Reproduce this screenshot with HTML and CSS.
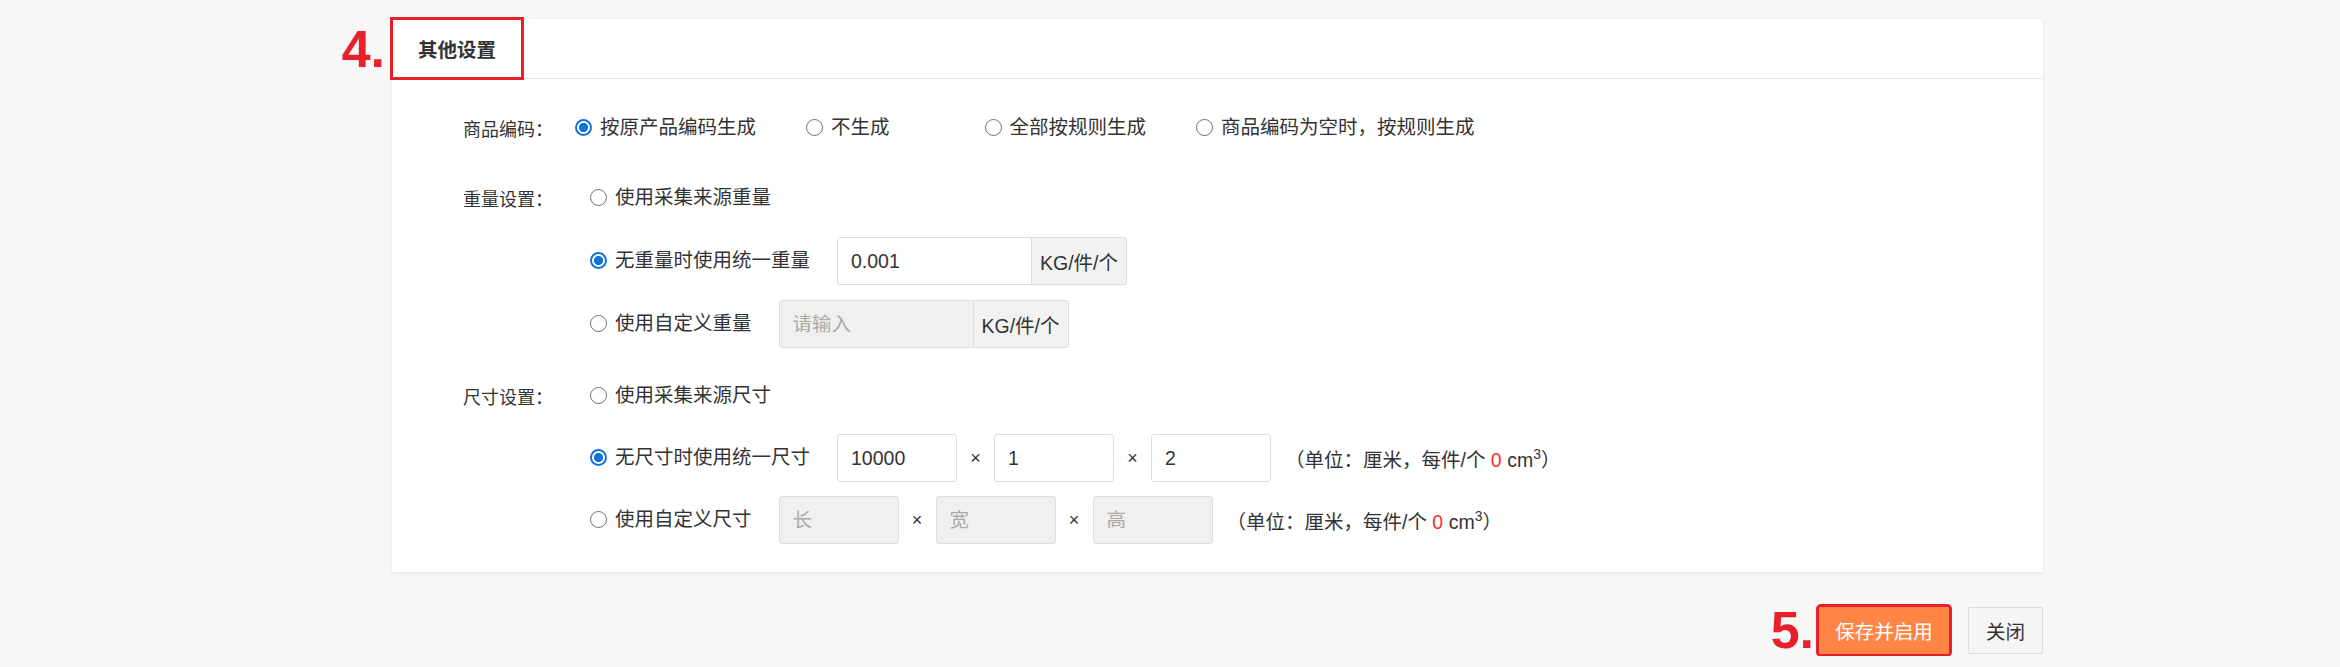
FILE: index.html
```html
<!DOCTYPE html>
<html lang="zh-CN">
<head>
<meta charset="UTF-8">
<meta name="viewport" content="width=device-width, initial-scale=1.0">
<title>其他设置</title>
<link rel="stylesheet" href="styles.css">
</head>
<body>
<div class="page">
    <div class="panel">
        <div class="panel-head">
            <div class="tab">
                <span class="mark mark-tab">4.</span>
                其他设置
            </div>
        </div>
        <div class="panel-body">
            <div class="form-row">
                <div class="form-label">商品编码：</div>
                <div class="form-field">
                    <div class="field-line">
                        <label class="radio"><input type="radio" name="code" checked>按原产品编码生成</label>
                        <label class="radio radio-wide"><input type="radio" name="code">不生成</label>
                        <label class="radio"><input type="radio" name="code">全部按规则生成</label>
                        <label class="radio"><input type="radio" name="code">商品编码为空时，按规则生成</label>
                    </div>
                </div>
            </div>
            <div class="form-row">
                <div class="form-label">重量设置：</div>
                <div class="form-field indent">
                    <div class="field-line">
                        <label class="radio"><input type="radio" name="weight">使用采集来源重量</label>
                    </div>
                    <div class="field-line">
                        <label class="radio"><input type="radio" name="weight" checked>无重量时使用统一重量</label>
                        <div class="input-group">
                            <input class="text-input" type="text" value="0.001">
                            <span class="addon">KG/件/个</span>
                        </div>
                    </div>
                    <div class="field-line">
                        <label class="radio"><input type="radio" name="weight">使用自定义重量</label>
                        <div class="input-group">
                            <input class="text-input is-disabled" type="text" placeholder="请输入">
                            <span class="addon">KG/件/个</span>
                        </div>
                    </div>
                </div>
            </div>
            <div class="form-row size-row">
                <div class="form-label">尺寸设置：</div>
                <div class="form-field indent">
                    <div class="field-line">
                        <label class="radio"><input type="radio" name="size">使用采集来源尺寸</label>
                    </div>
                    <div class="field-line">
                        <label class="radio"><input type="radio" name="size" checked>无尺寸时使用统一尺寸</label>
                        <div class="dims">
                            <input class="text-input dim-input" type="text" value="10000">
                            <span class="times">×</span>
                            <input class="text-input dim-input" type="text" value="1">
                            <span class="times">×</span>
                            <input class="text-input dim-input" type="text" value="2">
                        </div>
                        <span class="note">（单位：厘米，每件/个 <em class="zero">0</em> cm<sup>3</sup>）</span>
                    </div>
                    <div class="field-line">
                        <label class="radio"><input type="radio" name="size">使用自定义尺寸</label>
                        <div class="dims">
                            <input class="text-input dim-input is-disabled" type="text" placeholder="长">
                            <span class="times">×</span>
                            <input class="text-input dim-input is-disabled" type="text" placeholder="宽">
                            <span class="times">×</span>
                            <input class="text-input dim-input is-disabled" type="text" placeholder="高">
                        </div>
                        <span class="note">（单位：厘米，每件/个 <em class="zero">0</em> cm<sup>3</sup>）</span>
                    </div>
                </div>
            </div>
        </div>
    </div>
    <div class="actions">
        <span class="mark">5.</span>
        <button class="btn btn-primary">保存并启用</button>
        <button class="btn btn-default">关闭</button>
    </div>
</div>
</body>
</html>
```

FILE: styles.css
```css
body {
    margin: 0;
    background-color: #f7f7f7;
    color: #333;
    font-family: "Liberation Sans", "Noto Sans CJK SC", sans-serif;
}
.page {
    width: 1651px;
    margin-left: 392px;
    padding-top: 19px;
}
.panel {
    background-color: #fff;
    box-shadow: 0 1px 4px rgba(0, 0, 0, 0.08);
}
.panel-head {
    display: flex;
    height: 59px;
    border-bottom: 1px solid #e6e6e6;
}
.tab {
    position: relative;
    display: flex;
    align-items: center;
    padding: 0 26px;
    font-size: 19.5px;
    font-weight: bold;
    color: #333;
    outline: 3px solid #e8202a;
    outline-offset: -1px;
}
.mark {
    font-family: "Liberation Sans", sans-serif;
    font-size: 52px;
    font-weight: bold;
    line-height: 1;
    color: #e8202a;
}
.mark-tab {
    position: absolute;
    right: calc(100% + 7px);
    top: 50%;
    transform: translateY(-50%);
}
.panel-body {
    display: flex;
    flex-direction: column;
    gap: 22px;
    padding: 25px 0 28px 71px;
}
.form-row {
    display: flex;
    align-items: flex-start;
}
.form-row.size-row {
    margin-top: 2px;
}
.form-label {
    display: flex;
    align-items: center;
    width: 112px;
    height: 48px;
    font-size: 18px;
}
.form-field {
    display: flex;
    flex-direction: column;
    gap: 15px;
}
.form-field.indent {
    padding-left: 15px;
}
.size-row .form-field {
    gap: 14px;
}
.field-line {
    display: flex;
    align-items: center;
    height: 48px;
}
.radio {
    display: inline-flex;
    align-items: center;
    gap: 8px;
    margin-right: 50px;
    font-size: 19.5px;
    line-height: 1.2;
    cursor: pointer;
}
.radio-wide {
    margin-right: 95px;
}
.field-line .radio:last-child,
.form-field.indent .radio {
    margin-right: 0;
}
.radio input {
    appearance: none;
    -webkit-appearance: none;
    box-sizing: border-box;
    width: 17px;
    height: 17px;
    margin: 0;
    border: 1.5px solid #6f6f6f;
    border-radius: 50%;
    background-color: #fff;
}
.radio input:checked {
    border: 2px solid #1473d6;
    background: radial-gradient(circle, #1473d6 0 4.3px, #fff 4.8px);
}
.input-group {
    display: flex;
    margin-left: 27px;
}
.text-input {
    box-sizing: border-box;
    width: 195px;
    height: 48px;
    padding: 0 13px;
    border: 1px solid #ddd;
    border-radius: 3px;
    font-family: inherit;
    font-size: 19.5px;
    color: #333;
    background-color: #fff;
    outline: none;
}
.text-input::placeholder {
    color: #aaa;
}
.text-input.is-disabled {
    background-color: #f0f0f0;
}
.input-group .text-input {
    border-radius: 3px 0 0 3px;
}
.addon {
    display: flex;
    align-items: center;
    height: 48px;
    box-sizing: border-box;
    padding: 0 8px;
    border: 1px solid #ddd;
    border-left: none;
    border-radius: 0 3px 3px 0;
    background-color: #f2f2f2;
    font-size: 19.5px;
}
.dims {
    display: flex;
    align-items: center;
    margin-left: 27px;
}
.text-input.dim-input {
    width: 120px;
}
.times {
    width: 37px;
    text-align: center;
    font-size: 18px;
}
.note {
    margin-left: 14px;
    font-size: 19.5px;
}
.zero {
    font-style: normal;
    color: #f5312b;
}
.note sup {
    font-size: 14px;
    line-height: 0;
    vertical-align: 8px;
}
.actions {
    display: flex;
    justify-content: flex-end;
    align-items: center;
    margin-top: 32px;
}
.actions .mark {
    margin-right: 5px;
}
.btn {
    height: 47px;
    border-radius: 2px;
    font-family: inherit;
    font-size: 19.5px;
    cursor: pointer;
}
.btn-primary {
    width: 130px;
    border: none;
    background-color: #ff8547;
    color: #fff;
    outline: 3px solid #e8202a;
}
.btn-default {
    width: 75px;
    margin-left: 19px;
    border: 1px solid #dcdcdc;
    background-color: #f5f5f5;
    color: #333;
}
```
